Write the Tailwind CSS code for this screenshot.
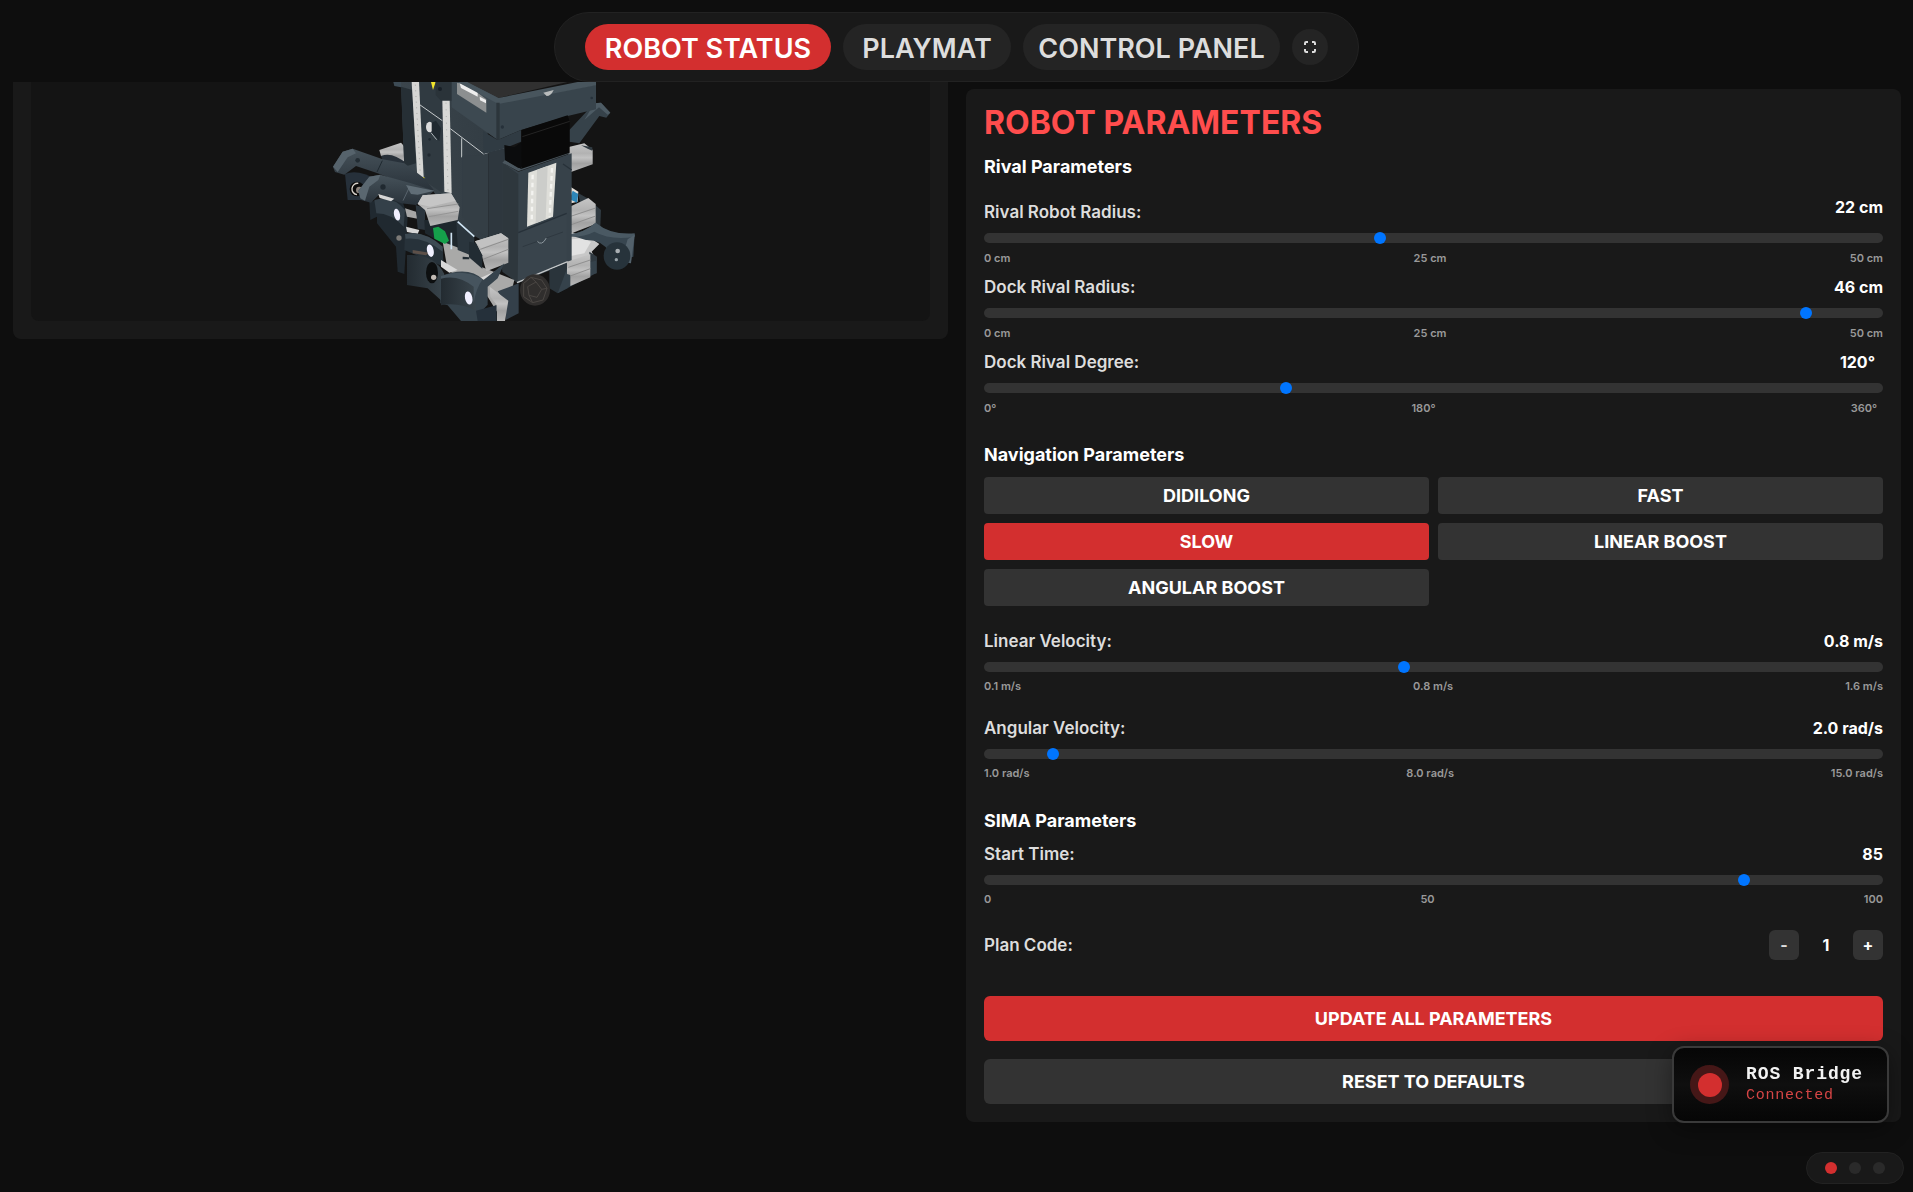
<!DOCTYPE html>
<html lang="en">
<head>
<meta charset="utf-8">
<meta name="viewport" content="width=device-width, initial-scale=1">
<title>Robot Status</title>
<script src="https://cdn.jsdelivr.net/npm/@tailwindcss/browser@4"></script>
</head>
<body class="min-h-screen bg-[#0e0e0e] font-['Inter',sans-serif] text-white">

<header class="flex h-[82px] justify-center pt-3">
  <nav class="flex h-[70px] items-center gap-3 rounded-full border border-[#222222] bg-[#191919] px-[30px] text-[27px] leading-8 font-semibold">
    <button class="h-[46px] w-[246px] rounded-full bg-[#d32f2f] pt-[3px] text-white">ROBOT STATUS</button>
    <button class="h-[46px] w-[168px] rounded-full bg-[#242424] pt-[3px] text-[#dddddd]">PLAYMAT</button>
    <button class="h-[46px] w-[257px] rounded-full bg-[#242424] pt-[3px] text-[#dddddd]">CONTROL PANEL</button>
    <button class="flex size-9 items-center justify-center rounded-full bg-[#242424] text-[#dddddd]" aria-label="Toggle fullscreen">
      <svg class="size-3" viewBox="0 0 12 12" fill="none" stroke="currentColor" stroke-width="2"><path d="M1 4V2.2Q1 1 2.2 1H4M8 1H9.8Q11 1 11 2.2V4M11 8V9.8Q11 11 9.8 11H8M4 11H2.2Q1 11 1 9.8V8"/></svg>
    </button>
  </nav>
</header>

<main class="grid grid-cols-2 items-start gap-[18px] pr-3 pl-[13px]">
  <section class="rounded-b-lg bg-[#191919] px-[18px] pb-[18px]" aria-label="Robot model">
    <div class="flex justify-center rounded-b-lg bg-[#141414]">
      <svg class="h-[239px] w-[360px]" viewBox="0 36 1080 717" role="img" aria-label="3D view of the robot">
        <defs>
          <linearGradient id="dark" x1="0" x2="1"><stop offset="0" stop-color="#232b31"/><stop offset="1" stop-color="#39444b"/></linearGradient>
          <linearGradient id="body" x1="0" x2="1"><stop offset="0" stop-color="#3b454c"/><stop offset="1" stop-color="#333d44"/></linearGradient>
          <linearGradient id="arm" x1="0" y1="0" x2="0" y2="1"><stop offset="0" stop-color="#46525a"/><stop offset="1" stop-color="#29323a"/></linearGradient>
          <linearGradient id="motor" x1="0" y1="0" x2="0" y2="1"><stop offset="0" stop-color="#c6c6c6"/><stop offset=".35" stop-color="#b2b2b2"/><stop offset=".5" stop-color="#c2c2c2"/><stop offset=".7" stop-color="#a2a2a2"/><stop offset="1" stop-color="#b8b8b8"/></linearGradient>
        </defs>
        <!-- rear right arm and motors -->
        <path fill="#36424a" d="M805 180L880 100L900 98L928 128L916 143L895 138L835 220L805 215Z"/>
        <path fill="#4d5b64" d="M880 100L900 98L928 128L920 134L894 112L850 150Z"/>
        <path fill="url(#motor)" d="M800 232L850 220L875 240L875 283L810 306Z"/>
        <path fill="#303a41" d="M840 226L874 232V242L860 236Z"/>
        <path fill="#e8e0d8" d="M800 345L832 365L830 395L800 402Z"/>
        <path fill="#2d86b8" d="M815 362L832 372L828 398L806 388Z"/>
        <path fill="#303a41" d="M830 368L858 384L900 420L898 470L850 440Z"/>
        <path fill="#c8c8c8" d="M790 480L870 505L895 522L872 545L886 572L880 590L790 600Z"/>
        <path fill="#e2e2e2" d="M795 510L840 505L870 515L850 550L798 560Z"/>
        <path fill="#303a41" d="M865 545L888 560V610L865 615Z"/>
        <path fill="url(#motor)" d="M800 413L862 384L884 402L884 462L812 490L800 450Z"/>
        <path stroke="#8f8f8f" stroke-width="3" d="M806 440L884 414M808 465L884 438"/>
        <path fill="#384650" d="M802 494Q850 488 884 458Q930 500 1001 492L997 560Q960 570 925 545Q900 508 855 510Z"/>
        <path fill="#4a5963" d="M802 494Q850 488 884 458Q930 496 1001 490V500Q930 512 880 485Q850 502 802 500Z"/>
        <path fill="#53616b" d="M980 508L1001 494L990 580L960 575Z"/>
        <ellipse cx="948" cy="558" rx="40" ry="41" fill="#27333b"/>
        <circle cx="950" cy="543" r="7" fill="#a9afb3"/><circle cx="946" cy="569" r="5" fill="#98a2a8"/>
        <!-- tower: left face -->
        <path fill="url(#motor)" d="M235 240L300 218L312 232V275L240 258Z"/>
        <path fill="#28313a" d="M240 258Q275 245 315 280L312 310L250 285Z"/>
        <path fill="#3d4b55" d="M277 36H330V110L312 112L300 52L280 48Z"/>
        <path fill="url(#body)" d="M300 36H560V520L470 470L370 325L310 290Z"/>
        <path fill="#303a41" d="M356 36H425V370L375 335L365 250L356 210Z"/>
        <path fill="#262f35" d="M300 50L334 60L345 280L310 290Z"/>
        <path fill="#d6d6d4" d="M332 36H354L368 322H349Z"/>
        <path stroke="#a9a9a6" stroke-width="3" stroke-dasharray="3 14" d="M343 44L358 315"/>
        <path fill="#f3e72c" d="M390 36H404L396 60ZM365 321H370V333H365Z"/>
        <path fill="none" stroke="#c7cbcd" stroke-width="3" d="M356 104L424 152M448 176L548 252L612 234M482 205V262"/>
        <path fill="#d8d8d6" d="M424 90H446L452 370L430 365Z"/>
        <path stroke="#aeb0ae" stroke-width="3" stroke-dasharray="3 17" d="M435 98L441 365"/>
        <path fill="#2a3339" d="M404 36H454V92H420L404 75Z"/>
        <circle cx="417" cy="57" r="6" fill="#182027"/>
        <ellipse cx="386" cy="171" rx="11" ry="16" fill="#dcdcdc"/>
        <path fill="#202930" d="M392 158L405 152L420 175L415 213L392 190Z"/>
        <path stroke="#aab1b5" stroke-width="3" d="M390 188L407 209"/>
        <circle cx="384" cy="255" r="5" fill="#202930"/><circle cx="386" cy="208" r="4" fill="#202930"/>
        <path fill="#2e373e" d="M562 246L612 234V520H562Z"/>
        <path fill="#343e45" d="M484 258L548 254L562 250V500L520 480L484 440Z"/>
        <!-- upper tray -->
        <path fill="#3d4951" d="M452 36H590V210L452 112Z"/>
        <path fill="#303030" d="M498 36H800L592 84Z"/>
        <path fill="#8c8f90" d="M468 38L498 44L556 88V128L468 72Z"/>
        <path fill="#eeeeee" d="M476 40L530 66V80L480 54ZM536 80L555 90V100L537 91Z"/>
        <path fill="#38444c" d="M590 100L885 44V118L800 138L660 180L590 210Z"/>
        <path fill="#48555d" d="M498 36L592 84L830 36H885V46L592 102L470 36Z"/>
        <path fill="#2c353b" d="M586 98H596V210L586 208Z"/>
        <path fill="#b9bcbc" d="M727 68L758 60Q750 78 737 78Z"/>
        <circle cx="604" cy="171" r="5" fill="#26313a"/><circle cx="872" cy="84" r="4" fill="#26313a"/>
        <path fill="#303b43" d="M546 184L590 210L660 180V215L612 235L548 252Z"/>
        <!-- right face -->
        <path fill="#37424a" d="M604 278L652 305L812 250V575L650 640L604 600Z"/>
        <path fill="#2e373d" d="M604 278L652 312V640L604 605Z"/>
        <path fill="#4a565e" d="M604 278L652 304L808 250L800 246L652 294L612 270Z"/>
        <path fill="#0b0c0d" d="M610 225L640 232L663 215L662 298L612 270Z"/>
        <path fill="#090909" d="M662 180L800 136L806 155V248L662 296Z"/>
        <path stroke="#242424" stroke-width="3" d="M664 200L806 154"/>
        <path fill="#deded9" d="M682 308L766 278L756 440L678 470Z"/>
        <path fill="#cccdca" d="M708 300L740 288L734 448L704 459Z"/>
        <path stroke="#f3f3f0" stroke-width="7" stroke-dasharray="14 10" d="M695 314L692 460M753 294L746 440"/>
        <path fill="#39444c" d="M652 488L797 430V575L650 640Z"/>
        <path stroke="#273139" stroke-width="4" d="M652 488L797 430M786 282L812 300"/>
        <path fill="none" stroke="#8e989e" stroke-width="3" d="M708 513Q722 530 736 504"/>
        <path stroke="#28323a" stroke-width="2" d="M665 530L710 514M736 504L786 486"/>
        <path stroke="#c5c8c9" stroke-width="4" d="M648 638L800 575"/>
        <path fill="#2a343b" d="M745 600L800 578V655L770 670L745 655Z"/>
        <path fill="#35424b" d="M800 590L885 572V610L770 670Z"/>
        <path fill="url(#motor)" d="M798 575L868 552V622L808 648V615L798 612Z"/>
        <path stroke="#8f8f8f" stroke-width="3" d="M802 592L868 570M808 618L868 596"/>
        <ellipse cx="702" cy="660" rx="45" ry="47" fill="#302e2d"/>
        <path fill="none" stroke="#4a4643" stroke-width="3" d="M668 640L690 622L722 630L738 655L726 690L695 698L668 680ZM680 650L705 636L722 658L708 682L684 676ZM690 622L705 636M738 655L722 658M695 698L684 676"/>
        <!-- left gripper arms -->
        <path fill="#26303a" d="M132 312Q170 295 230 330L215 390H140Z"/>
        <circle cx="168" cy="357" r="22" fill="#0b0b0b"/><path fill="none" stroke="#d8d2cb" stroke-width="4" d="M172 340A17 17 0 1 0 168 374"/><circle cx="175" cy="360" r="10" fill="#8b827c"/>
        <path fill="url(#arm)" d="M96 290L125 245L155 236L245 268L310 280L370 325L400 362L320 345L230 310L165 288L130 314L102 306Z"/>
        <path fill="#56636c" d="M96 290L125 245L155 236L165 250L140 262L110 306Z"/>
        <path stroke="#1f2930" stroke-width="3" d="M244 272L228 306"/>
        <circle cx="170" cy="271" r="7" fill="#222c33"/>
        <path fill="#202930" d="M205 395L300 380L320 440L310 612L290 605L285 530L228 460V440L208 450Z"/>
        <path fill="#344049" d="M220 390Q275 375 312 420L308 470Q270 430 226 430Z"/>
        <path fill="url(#arm)" d="M172 362L205 320L238 314L330 340L400 362L345 405L300 400L236 372L210 398L180 390Z"/>
        <path fill="#5a6770" d="M172 362L205 320L238 314L232 330L205 350L192 392L178 385Z"/>
        <path fill="#606d76" d="M315 345L400 362L350 374L330 372Z"/>
        <path stroke="#69767f" stroke-width="2" d="M326 350L306 392"/>
        <circle cx="246" cy="351" r="8" fill="#202930"/>
        <path fill="#d6d6d6" d="M232 372L280 386L270 394L236 384ZM315 470L355 480L350 492L318 486Z"/>
        <path fill="#a6a6a6" d="M312 415L345 425L350 446L318 440Z"/>
        <ellipse cx="288" cy="434" rx="9" ry="18" fill="#f1f0ff" transform="rotate(-12 288 434)"/>
        <circle cx="294" cy="504" r="8" fill="#7c7a77"/>
        <path fill="#2b353d" d="M344 405L372 415V480L350 476Z"/>
        <path fill="#1e272d" d="M370 450H470V540L425 520L372 490Z"/>
        <path fill="url(#motor)" d="M350 402L365 376L450 370L476 412L470 450L388 468L372 420Z"/>
        <path fill="#c6c6c6" d="M350 402L365 376L450 370L464 392L388 410Z"/>
        <path stroke="#959595" stroke-width="3" d="M378 416L472 402M384 440L472 424"/>
        <!-- lower mechanism -->
        <path fill="#a9a9a8" d="M425 515L490 540L540 590L640 630L620 710L600 745L560 680L440 600Z"/>
        <path fill="#15a04b" d="M396 474L412 470L432 484L444 512L432 522L400 506Z"/>
        <path fill="#2a353d" d="M466 452L520 500V560L470 540Z"/>
        <path stroke="#cfe3f2" stroke-width="5" d="M470 455L520 500M451 488V538"/>
        <path fill="url(#motor)" d="M522 514L600 490L622 505V578L556 604L540 550Z"/>
        <path fill="#c2c2c2" d="M522 514L600 490L622 505L540 535Z"/>
        <path stroke="#8f8f8f" stroke-width="3" d="M538 538L622 508M546 568L622 538"/>
        <path fill="#222c33" d="M504 515L525 520L544 556V596L504 562Z"/>
        <path fill="#222c33" d="M485 560L505 562V568H485Z"/>
        <!-- front pods -->
        <path fill="#27323a" d="M312 492Q370 480 425 530L428 590L310 540Z"/>
        <path fill="#3d4a53" d="M312 492Q370 480 425 530V545Q370 500 314 506Z"/>
        <path fill="#5d5049" d="M335 540L385 548L375 556L335 550Z"/>
        <ellipse cx="388" cy="542" rx="10" ry="19" fill="#f1f0ff" transform="rotate(-12 388 542)"/>
        <path fill="url(#dark)" d="M318 555Q400 550 430 612V700L380 655L318 645Z"/>
        <ellipse cx="393" cy="608" rx="18" ry="32" fill="#0d0f10"/><circle cx="398" cy="622" r="8" fill="#c2bbb4"/>
        <path fill="#d8d8d8" d="M420 570L470 600L445 608L420 590ZM536 625L600 596L545 630Z"/>
        <path fill="#36434c" d="M418 620Q500 585 548 630L610 580L590 625L560 650V704L540 725L586 706V753H480L440 706L418 700Z"/>
        <path fill="url(#dark)" d="M420 625Q475 610 520 650L525 722Q470 695 420 706Z"/>
        <path fill="#46545e" d="M420 618Q490 595 545 628Q525 655 518 700V650Q470 612 420 626Z"/>
        <ellipse cx="503" cy="684" rx="11" ry="20" fill="#f1f0ff" transform="rotate(-12 503 684)"/>
        <path fill="#34404a" d="M590 664L653 640V730L614 750V700Z"/>
        <path fill="url(#motor)" d="M566 650L590 668L622 692L612 753H588V706L568 680Z"/>
        <path fill="#25303a" d="M525 722L586 706V753H530Z"/>
      </svg>
    </div>
  </section>

  <section class="mt-[7px] rounded-lg bg-[#191919] p-[18px]">
    <h2 class="text-[32px] leading-8 font-bold text-[#ff4d4d]">ROBOT PARAMETERS</h2>

    <h3 class="mt-4 text-lg leading-6 font-bold">Rival Parameters</h3>
    <div class="mt-4">
      <div class="flex h-[38px] justify-between text-[17px] leading-6 font-semibold"><label for="rival-radius" class="pt-[5px] text-[#dddddd]">Rival Robot Radius:</label><output class="text-base leading-6 font-bold">22 cm</output></div>
      <input id="rival-radius" type="range" min="0" max="50" value="22" class="block h-[10px] w-full appearance-none rounded-full bg-[#333333] [&::-webkit-slider-thumb]:size-3 [&::-webkit-slider-thumb]:appearance-none [&::-webkit-slider-thumb]:rounded-full [&::-webkit-slider-thumb]:bg-[#0075ff]">
      <div class="mt-2 flex justify-between text-[11px] leading-[14px] font-semibold text-[#999999]"><span>0 cm</span><span>25 cm</span><span>50 cm</span></div>
    </div>
    <div class="mt-[10px]">
      <div class="flex h-[33px] justify-between text-[17px] leading-6 font-semibold"><label for="dock-radius" class="text-[#dddddd]">Dock Rival Radius:</label><output class="text-base leading-6 font-bold">46 cm</output></div>
      <input id="dock-radius" type="range" min="0" max="50" value="46" class="block h-[10px] w-full appearance-none rounded-full bg-[#333333] [&::-webkit-slider-thumb]:size-3 [&::-webkit-slider-thumb]:appearance-none [&::-webkit-slider-thumb]:rounded-full [&::-webkit-slider-thumb]:bg-[#0075ff]">
      <div class="mt-2 flex justify-between text-[11px] leading-[14px] font-semibold text-[#999999]"><span>0 cm</span><span>25 cm</span><span>50 cm</span></div>
    </div>
    <div class="mt-[10px]">
      <div class="flex h-[33px] justify-between text-[17px] leading-6 font-semibold"><label for="dock-degree" class="text-[#dddddd]">Dock Rival Degree:</label><output class="pr-2 text-base leading-6 font-bold">120°</output></div>
      <input id="dock-degree" type="range" min="0" max="360" value="120" class="block h-[10px] w-full appearance-none rounded-full bg-[#333333] [&::-webkit-slider-thumb]:size-3 [&::-webkit-slider-thumb]:appearance-none [&::-webkit-slider-thumb]:rounded-full [&::-webkit-slider-thumb]:bg-[#0075ff]">
      <div class="mt-2 flex justify-between pr-[6px] text-[11px] leading-[14px] font-semibold text-[#999999]"><span>0°</span><span>180°</span><span>360°</span></div>
    </div>

    <h3 class="mt-[28px] text-lg leading-6 font-bold">Navigation Parameters</h3>
    <div class="mt-[10px] grid grid-cols-2 gap-[9px] text-lg leading-6 font-bold">
      <button class="h-[37px] rounded bg-[#333333]">DIDILONG</button>
      <button class="h-[37px] rounded bg-[#333333]">FAST</button>
      <button class="h-[37px] rounded bg-[#d32f2f]">SLOW</button>
      <button class="h-[37px] rounded bg-[#333333]">LINEAR BOOST</button>
      <button class="h-[37px] rounded bg-[#333333]">ANGULAR BOOST</button>
    </div>

    <div class="mt-[23px]">
      <div class="flex h-[33px] justify-between text-[17px] leading-6 font-semibold"><label for="linear-velocity" class="text-[#dddddd]">Linear Velocity:</label><output class="text-base leading-6 font-bold">0.8 m/s</output></div>
      <input id="linear-velocity" type="range" min="0.1" max="1.6" step="0.1" value="0.8" class="block h-[10px] w-full appearance-none rounded-full bg-[#333333] [&::-webkit-slider-thumb]:size-3 [&::-webkit-slider-thumb]:appearance-none [&::-webkit-slider-thumb]:rounded-full [&::-webkit-slider-thumb]:bg-[#0075ff]">
      <div class="mt-[7px] flex justify-between text-[11px] leading-[14px] font-semibold text-[#999999]"><span>0.1 m/s</span><span>0.8 m/s</span><span>1.6 m/s</span></div>
    </div>
    <div class="mt-[23px]">
      <div class="flex h-[33px] justify-between text-[17px] leading-6 font-semibold"><label for="angular-velocity" class="text-[#dddddd]">Angular Velocity:</label><output class="text-base leading-6 font-bold">2.0 rad/s</output></div>
      <input id="angular-velocity" type="range" min="1" max="15" step="0.1" value="2" class="block h-[10px] w-full appearance-none rounded-full bg-[#333333] [&::-webkit-slider-thumb]:size-3 [&::-webkit-slider-thumb]:appearance-none [&::-webkit-slider-thumb]:rounded-full [&::-webkit-slider-thumb]:bg-[#0075ff]">
      <div class="mt-[7px] flex justify-between text-[11px] leading-[14px] font-semibold text-[#999999]"><span>1.0 rad/s</span><span>8.0 rad/s</span><span>15.0 rad/s</span></div>
    </div>

    <h3 class="mt-[29px] text-lg leading-6 font-bold">SIMA Parameters</h3>
    <div class="mt-[9px]">
      <div class="flex h-[33px] justify-between text-[17px] leading-6 font-semibold"><label for="start-time" class="text-[#dddddd]">Start Time:</label><output class="text-base leading-6 font-bold">85</output></div>
      <input id="start-time" type="range" min="0" max="100" value="85" class="block h-[10px] w-full appearance-none rounded-full bg-[#333333] [&::-webkit-slider-thumb]:size-3 [&::-webkit-slider-thumb]:appearance-none [&::-webkit-slider-thumb]:rounded-full [&::-webkit-slider-thumb]:bg-[#0075ff]">
      <div class="mt-[7px] flex justify-between text-[11px] leading-[14px] font-semibold text-[#999999]"><span>0</span><span>50</span><span>100</span></div>
    </div>

    <div class="mt-6 flex items-center justify-between text-[17px] leading-6 font-semibold">
      <span class="text-[#dddddd]">Plan Code:</span>
      <div class="flex items-center text-base leading-6 font-bold">
        <button class="size-[30px] rounded-md bg-[#333333] text-[#dddddd]" aria-label="Decrease plan code">-</button>
        <output class="w-[54px] text-center">1</output>
        <button class="size-[30px] rounded-md bg-[#333333]" aria-label="Increase plan code">+</button>
      </div>
    </div>

    <div class="mt-9 grid gap-[18px] text-lg leading-6 font-bold">
      <button class="h-[45px] rounded-md bg-[#d32f2f]">UPDATE ALL PARAMETERS</button>
      <button class="h-[45px] rounded-md bg-[#333333]">RESET TO DEFAULTS</button>
    </div>
  </section>
</main>

<!-- floating connection status -->
<aside class="fixed right-6 bottom-[69px] flex h-[77px] w-[217px] items-center gap-[17px] rounded-xl border-2 border-[#3a3a3a] bg-linear-to-b from-[#060606] via-[#0f0f0f] to-[#060606] pl-4 font-['Liberation_Mono',monospace] shadow-[0_6px_24px_rgba(0,0,0,0.4)]">
  <span class="flex size-[39px] items-center justify-center rounded-full bg-[#451717]"><span class="size-6 rounded-full bg-[#d32f2f]"></span></span>
  <div>
    <p class="text-lg leading-[22px] font-bold tracking-wider text-[#f2f2f2]">ROS Bridge</p>
    <p class="text-[15px] leading-[22px] tracking-wider text-[#d64545]">Connected</p>
  </div>
</aside>

<div class="fixed right-[9px] bottom-2 flex h-8 w-[98px] items-center justify-center gap-3 rounded-full border border-[#222222] bg-[#191919]">
  <button class="size-3 rounded-full bg-[#d32f2f]" aria-label="Page 1"></button>
  <button class="size-3 rounded-full bg-[#2a2a2a]" aria-label="Page 2"></button>
  <button class="size-3 rounded-full bg-[#2a2a2a]" aria-label="Page 3"></button>
</div>
</body>
</html>
